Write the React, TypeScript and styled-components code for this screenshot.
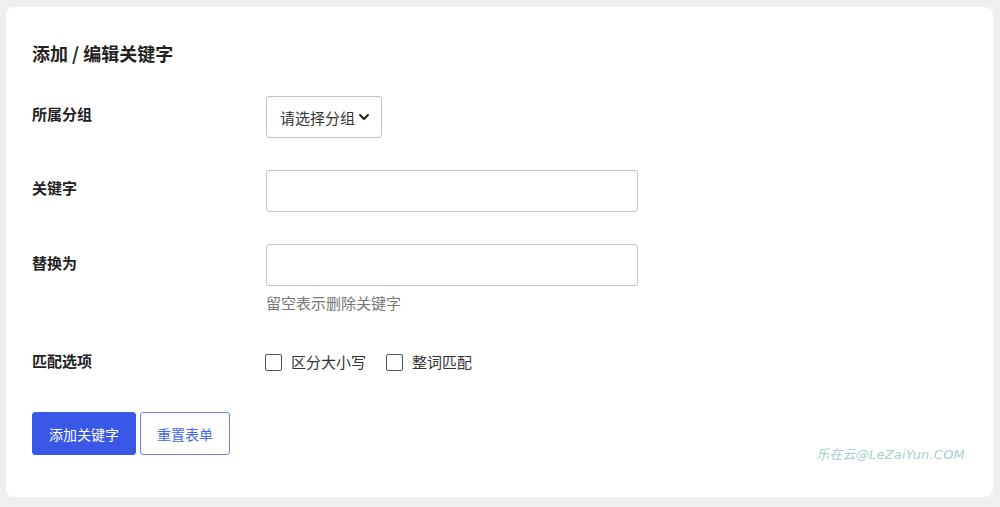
import React from "react";
import styled, { createGlobalStyle } from "styled-components";

const Global = createGlobalStyle`
  html, body { margin: 0; padding: 0; background: #efefef; }
  body { font-family: "Noto Sans CJK SC", "Noto Sans", sans-serif; color: #222; }
  * { box-sizing: border-box; }
`;

const Page = styled.div`
  padding: 7px 7px 10px 6px;
  height: 507px;
`;

const Card = styled.div`
  position: relative;
  background: #fff;
  border-radius: 8px;
  height: 490px;
  padding: 33px 26px 0 26px;
`;

const Title = styled.h2`
  margin: 0 0 30px 0;
  font-size: 18px;
  line-height: 26px;
  font-weight: 700;
  color: #222;
`;

const Row = styled.div<{ $gap?: number }>`
  display: grid;
  grid-template-columns: 234px 1fr;
  align-items: start;
  margin-bottom: ${(p) => p.$gap ?? 32}px;
`;

const Label = styled.div<{ $pt?: number }>`
  font-size: 15px;
  font-weight: 700;
  line-height: 22px;
  padding-top: ${(p) => p.$pt ?? 8}px;
  color: #222;
`;

const Field = styled.div`
  display: flex;
  flex-direction: column;
`;

const Select = styled.div`
  display: inline-flex;
  align-items: center;
  align-self: flex-start;
  height: 42px;
  padding: 0 11px 0 13px;
  border: 1px solid #c2c2c2;
  border-radius: 3px;
  font-size: 15px;
  color: #333;
  gap: 3px;
`;

const Input = styled.input`
  width: 372px;
  height: 42px;
  border: 1px solid #c4c4c4;
  border-radius: 3px;
  outline: none;
  padding: 0 10px;
  font-size: 15px;
  font-family: inherit;
  background: #fff;
`;

const Hint = styled.div`
  margin-top: 7px;
  font-size: 15px;
  line-height: 20px;
  color: #777;
`;

const Options = styled.div`
  display: flex;
  align-items: center;
  gap: 21px;
  padding-top: 1px;
`;

const Check = styled.label`
  display: flex;
  align-items: center;
  gap: 9px;
  font-size: 15px;
  line-height: 22px;
  color: #333;
`;

const Box = styled.span`
  width: 17px;
  height: 17px;
  border: 1.5px solid #555;
  border-radius: 2px;
  margin-left: -1px;
`;

const Buttons = styled.div`
  display: flex;
  gap: 4px;
`;

const Button = styled.button<{ $primary?: boolean }>`
  height: 43px;
  padding: 0 16px;
  border-radius: 3px;
  font-family: inherit;
  font-size: 14px;
  border: 1px solid ${(p) => (p.$primary ? "#3a58e8" : "#6a85f0")};
  background: ${(p) => (p.$primary ? "#3a58e8" : "#fff")};
  color: ${(p) => (p.$primary ? "#fff" : "#4566ee")};
`;

const Watermark = styled.div`
  position: absolute;
  right: 28px;
  bottom: 34px;
  font-family: "DejaVu Sans", "Noto Sans CJK SC", sans-serif;
  font-style: italic;
  font-size: 13px;
  color: #a6cfd0;
  letter-spacing: 0.2px;
`;

const Chevron = () => (
  <svg width="12" height="12" viewBox="0 0 12 12">
    <path d="M2 4 L6 8 L10 4" fill="none" stroke="#222" strokeWidth="2" strokeLinecap="round" strokeLinejoin="round" />
  </svg>
);

export default function App() {
  return (
    <>
      <Global />
      <Page>
        <Card>
          <Title>添加 / 编辑关键字</Title>
          <Row>
            <Label $pt={7}>所属分组</Label>
            <Field>
              <Select>
                请选择分组
                <Chevron />
              </Select>
            </Field>
          </Row>
          <Row>
            <Label $pt={7}>关键字</Label>
            <Field>
              <Input />
            </Field>
          </Row>
          <Row $gap={37}>
            <Label $pt={8}>替换为</Label>
            <Field>
              <Input />
              <Hint>留空表示删除关键字</Hint>
            </Field>
          </Row>
          <Row $gap={39}>
            <Label $pt={0}>匹配选项</Label>
            <Options>
              <Check>
                <Box />
                区分大小写
              </Check>
              <Check>
                <Box />
                整词匹配
              </Check>
            </Options>
          </Row>
          <Buttons>
            <Button $primary>添加关键字</Button>
            <Button>重置表单</Button>
          </Buttons>
          <Watermark>乐在云@LeZaiYun.COM</Watermark>
        </Card>
      </Page>
    </>
  );
}
